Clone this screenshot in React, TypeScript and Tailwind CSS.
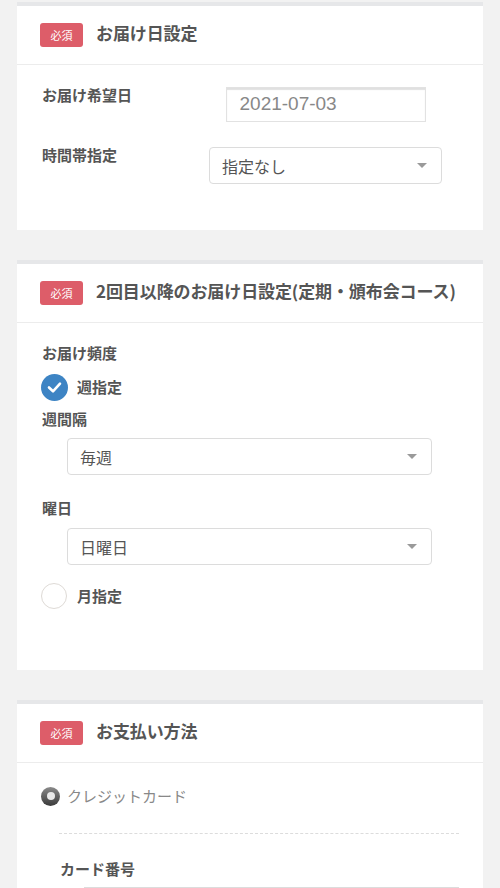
import React from "react";

const Badge: React.FC = () => (
  <span className="flex h-[24px] w-[43px] items-center justify-center rounded-[3px] bg-[#dd5d69] text-[11px] leading-none text-white">
    必須
  </span>
);

const CardHeader: React.FC<{ title: string }> = ({ title }) => (
  <div className="flex h-[59px] items-center gap-[13px] border-b border-[#ececec] pl-[23px]">
    <Badge />
    <h2 className="mb-[4px] text-[17px] font-bold tracking-[-0.1px] text-[#555]">{title}</h2>
  </div>
);

const Caret: React.FC = () => (
  <svg width="10" height="6" viewBox="0 0 10 6" className="absolute right-[14px] top-1/2 -translate-y-1/2">
    <path d="M0 0h10L5 5z" fill="#9a9a9a" />
  </svg>
);

const SelectBox: React.FC<{ value: string; className?: string }> = ({ value, className }) => (
  <div
    className={`relative flex h-[37px] items-center rounded-[4px] border border-[#dcdcdc] bg-white pl-[12px] text-[16px] text-[#555] ${className ?? ""}`}
  >
    {value}
    <Caret />
  </div>
);

const CheckCircle: React.FC = () => (
  <span className="flex h-[27px] w-[27px] items-center justify-center rounded-full bg-[#3d84c4]">
    <svg width="27" height="27" viewBox="0 0 27 27">
      <path d="M8 13.5l4 3.8 7-7.6" fill="none" stroke="white" strokeWidth="2.6" strokeLinecap="round" strokeLinejoin="round" />
    </svg>
  </span>
);

const EmptyCircle: React.FC = () => (
  <span className="h-[26px] w-[26px] rounded-full border border-[#dedad6] bg-white" />
);

export default function App() {
  return (
    <div className="min-h-screen bg-[#f2f2f2] px-[17px] pt-[2px] font-['Noto_Sans_CJK_JP',sans-serif] text-[#555]">
      {/* お届け日設定 */}
      <section className="border-t-4 border-[#e6e7e9] bg-white">
        <CardHeader title="お届け日設定" />
        <div className="flex flex-col gap-[23px] pb-[46px] pl-[25px] pr-[41px] pt-[20px]">
          <div className="flex items-start">
            <label className="w-[167px] text-[15px] font-bold leading-[20px]">お届け希望日</label>
            <div className="flex flex-1 justify-center">
              <div className="mt-[2px] flex h-[35px] w-[200px] items-center border border-[#e2e2e2] pl-[13px] font-['Liberation_Sans',sans-serif] text-[19px] text-[#888] shadow-[inset_0_2px_1px_rgba(0,0,0,0.12)]">
                2021-07-03
              </div>
            </div>
          </div>
          <div className="flex items-start">
            <label className="w-[167px] text-[15px] font-bold leading-[20px]">時間帯指定</label>
            <SelectBox value="指定なし" className="mt-[2px] flex-1" />
          </div>
        </div>
      </section>

      {/* 2回目以降 */}
      <section className="mt-[30px] border-t-4 border-[#e6e7e9] bg-white">
        <CardHeader title="2回目以降のお届け日設定(定期・頒布会コース)" />
        <div className="flex flex-col pb-[61px] pl-[24px] pr-[51px] pt-[20px]">
          <p className="pl-[1px] text-[15px] font-bold leading-[20px]">お届け頻度</p>
          <div className="mt-[11px] flex items-center gap-[9px]">
            <CheckCircle />
            <span className="text-[15px] font-bold">週指定</span>
          </div>
          <p className="mt-[8px] pl-[1px] text-[15px] font-bold leading-[20px]">週間隔</p>
          <SelectBox value="毎週" className="ml-[26px] mt-[9px]" />
          <p className="mt-[23px] pl-[1px] text-[15px] font-bold leading-[20px]">曜日</p>
          <SelectBox value="日曜日" className="ml-[26px] mt-[10px]" />
          <div className="mt-[18px] flex items-center gap-[10px]">
            <EmptyCircle />
            <span className="text-[15px] font-bold">月指定</span>
          </div>
        </div>
      </section>

      {/* お支払い方法 */}
      <section className="mt-[30px] border-t-4 border-[#e6e7e9] bg-white">
        <CardHeader title="お支払い方法" />
        <div className="pl-[24px] pr-[24px] pt-[22px]">
          <div className="flex items-center gap-[7px]">
            <span className="flex h-[19px] w-[19px] items-center justify-center rounded-full bg-[linear-gradient(#8a8a8a,#3a3a3a)]">
              <span className="h-[8px] w-[8px] rounded-full bg-[#e9e9e9]" />
            </span>
            <span className="text-[15px] text-[#888]">クレジットカード</span>
          </div>
          <div className="ml-[18px] mt-[25px] border-t border-dashed border-[#dcdcdc]">
            <p className="mt-[25px] pl-[1px] text-[15px] font-bold leading-[20px]">カード番号</p>
            <div className="ml-[25px] mt-[8px] h-[37px] border border-[#dcdcdc]" />
          </div>
        </div>
      </section>
    </div>
  );
}
